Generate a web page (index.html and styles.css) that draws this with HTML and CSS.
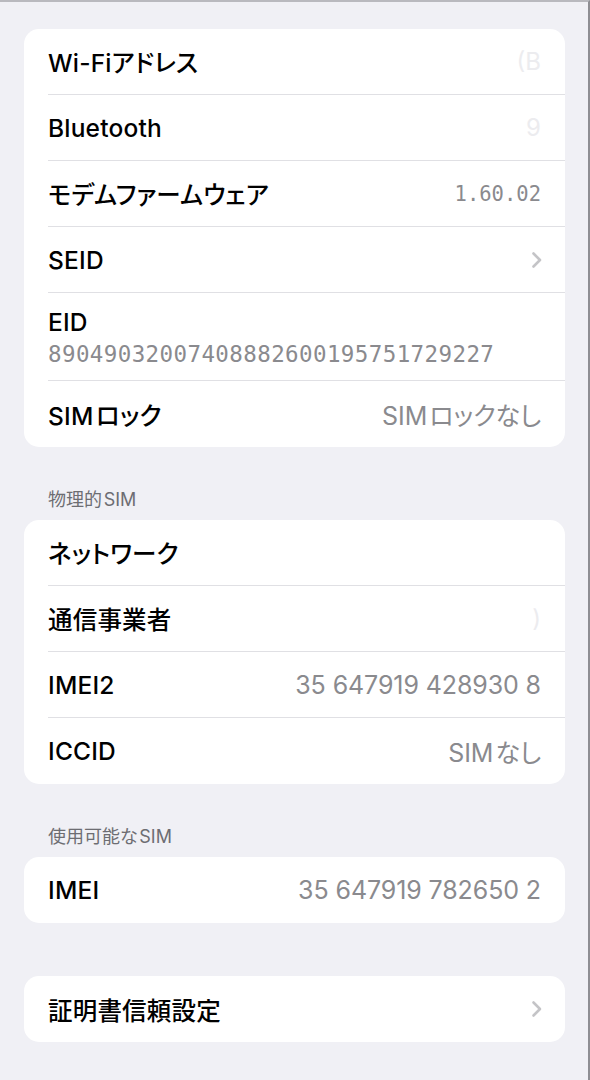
FILE: index.html
```html
<!DOCTYPE html>
<html lang="ja">
<head>
<meta charset="utf-8">
<link rel="stylesheet" href="styles.css">
</head>
<body>
<div class="screen">
  <div class="card first">
    <div class="row"><span class="label">Wi-Fiアドレス</span><span class="ghost">(B</span></div>
    <div class="row"><span class="label">Bluetooth</span><span class="ghost">9</span></div>
    <div class="row"><span class="label">モデムファームウェア</span><span class="value mono">1.60.02</span></div>
    <div class="row"><span class="label">SEID</span>
      <svg class="chev" width="12" height="18" viewBox="0 0 12 18"><path d="M2.5 2.5 L9 9 L2.5 15.5" fill="none" stroke="#c4c4c7" stroke-width="2.6" stroke-linecap="round" stroke-linejoin="round"/></svg>
    </div>
    <div class="row tall"><span class="label">EID</span><span class="sub mono">89049032007408882600195751729227</span></div>
    <div class="row"><span class="label">SIM&#8202;ロック</span><span class="value">SIM&#8202;ロックなし</span></div>
  </div>

  <div class="header">物理的&#8202;SIM</div>
  <div class="card">
    <div class="row"><span class="label">ネットワーク</span></div>
    <div class="row"><span class="label">通信事業者</span><span class="ghost">)</span></div>
    <div class="row"><span class="label">IMEI2</span><span class="value">35 647919 428930 8</span></div>
    <div class="row"><span class="label">ICCID</span><span class="value">SIM&#8202;なし</span></div>
  </div>

  <div class="header">使用可能な&#8202;SIM</div>
  <div class="card">
    <div class="row"><span class="label">IMEI</span><span class="value">35 647919 782650 2</span></div>
  </div>

  <div class="card last">
    <div class="row"><span class="label">証明書信頼設定</span>
      <svg class="chev" width="12" height="18" viewBox="0 0 12 18"><path d="M2.5 2.5 L9 9 L2.5 15.5" fill="none" stroke="#c4c4c7" stroke-width="2.6" stroke-linecap="round" stroke-linejoin="round"/></svg>
    </div>
  </div>
</div>
</body>
</html>
```

FILE: styles.css
```css
html, body {
  margin: 0;
  padding: 0;
  background: #f0f0f5;
}
.screen {
  width: 588px;
  height: 1078px;
  border-top: 2px solid #b9b9be;
  border-right: 2px solid #8e8e93;
  background: #f0f0f5;
  font-family: Inter, "Noto Sans CJK JP", sans-serif;
  font-feature-settings: "palt";
  color: #000;
  display: flex;
  flex-direction: column;
  overflow: hidden;
}
.card {
  margin: 0 23px 0 24px;
  background: #fff;
  border-radius: 15px;
  overflow: hidden;
}
.card.first {
  margin-top: 27px;
}
.card.last {
  margin-top: 53px;
}
.row {
  height: 66px;
  margin-left: 24px;
  padding-right: 24px;
  display: flex;
  align-items: center;
  justify-content: space-between;
  border-bottom: 1px solid #e0e0e4;
  box-sizing: border-box;
}
.row:last-child {
  border-bottom: none;
}
.row.tall {
  height: 88px;
  flex-direction: column;
  align-items: flex-start;
  justify-content: center;
  gap: 4px;
}
.label {
  font-size: 24.5px;
  font-weight: 500;
  letter-spacing: 0.2px;
}
.value {
  font-size: 25px;
  color: #8a8a8e;
  letter-spacing: -0.1px;
}
.value.mono {
  font-family: "DejaVu Sans Mono", monospace;
  font-size: 20.5px;
  letter-spacing: 0;
}
.sub {
  color: #8a8a8e;
  font-family: "DejaVu Sans Mono", monospace;
  font-size: 22.5px;
  letter-spacing: 0.4px;
}
.ghost {
  font-size: 24px;
  color: #ececef;
}
.chev {
  display: block;
  margin-right: -2px;
}
.header {
  font-size: 18px;
  color: #6d6d72;
  padding: 41px 0 8px 48px;
  line-height: 24px;
}
```
